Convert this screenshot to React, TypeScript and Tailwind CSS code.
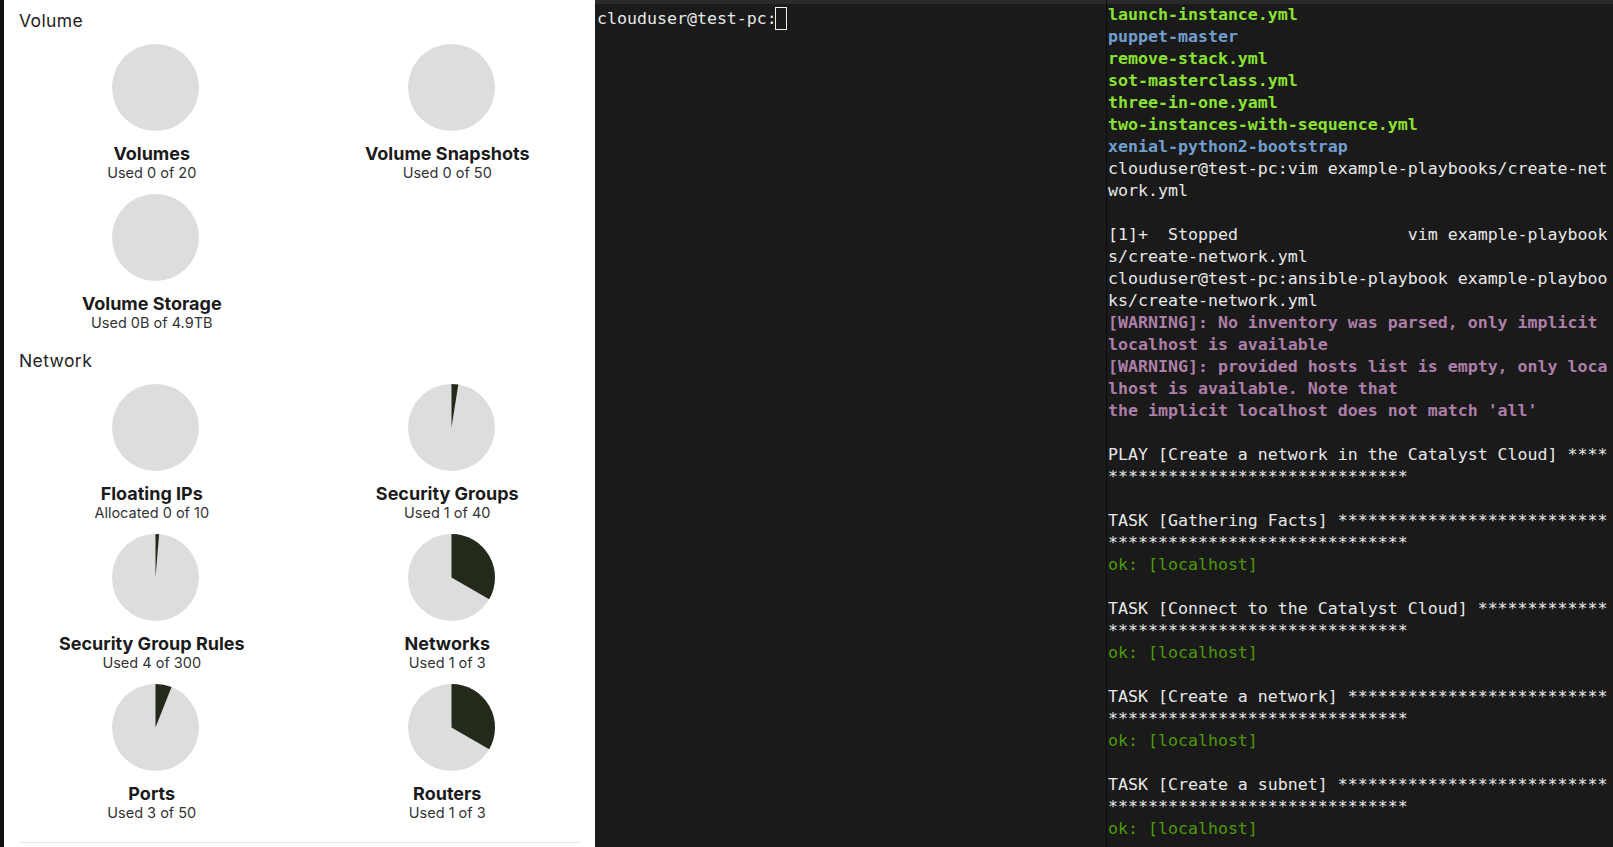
import React from "react";

type Quota = { title: string; sub: string; used: number; total: number };

const volume: Quota[] = [
  { title: "Volumes", sub: "Used 0 of 20", used: 0, total: 20 },
  { title: "Volume Snapshots", sub: "Used 0 of 50", used: 0, total: 50 },
  { title: "Volume Storage", sub: "Used 0B of 4.9TB", used: 0, total: 1 },
];

const network: Quota[] = [
  { title: "Floating IPs", sub: "Allocated 0 of 10", used: 0, total: 10 },
  { title: "Security Groups", sub: "Used 1 of 40", used: 1, total: 40 },
  { title: "Security Group Rules", sub: "Used 4 of 300", used: 4, total: 300 },
  { title: "Networks", sub: "Used 1 of 3", used: 1, total: 3 },
  { title: "Ports", sub: "Used 3 of 50", used: 3, total: 50 },
  { title: "Routers", sub: "Used 1 of 3", used: 1, total: 3 },
];

function Pie({ frac }: { frac: number }) {
  let slice = null;
  if (frac > 0) {
    const a = 2 * Math.PI * frac;
    const x = 50 + 50 * Math.sin(a);
    const y = 50 - 50 * Math.cos(a);
    const large = frac > 0.5 ? 1 : 0;
    slice = <path d={`M50 50 L50 0 A50 50 0 ${large} 1 ${x} ${y} Z`} fill="#232a1b" />;
  }
  return (
    <svg width="87" height="87" viewBox="0 0 100 100" className="ml-2 block">
      <circle cx="50" cy="50" r="50" fill="#dddddd" />
      {slice}
    </svg>
  );
}

function Cell({ q }: { q: Quota }) {
  return (
    <div className="flex h-[150px] flex-col items-center">
      <Pie frac={q.used / q.total} />
      <div className="mt-[13px] h-5 text-[18px] font-bold leading-5 text-[#1b1b1b]">{q.title}</div>
      <div className="h-[18px] text-[14.5px] leading-[18px] text-[#333333]">{q.sub}</div>
    </div>
  );
}

function Section({ title, items, first }: { title: string; items: Quota[]; first?: boolean }) {
  return (
    <div className={first ? "" : "mt-1"}>
      <div className="mb-3 h-6 pt-px text-[17.5px] leading-6 tracking-[0.4px] text-[#222]">{title}</div>
      <div className="-mx-[15px] grid grid-cols-2">
        {items.map((q) => (
          <Cell key={q.title} q={q} />
        ))}
      </div>
    </div>
  );
}

type Line = { t: string; c?: string };

const G = "font-bold text-[#8ae234]";
const B = "font-bold text-[#729fcf]";
const W = "font-bold text-[#ad7fa8]";
const OK = "text-[#4e9a06]";

const stars30 = "*".repeat(30);

const lines: Line[] = [
  { t: "launch-instance.yml", c: G },
  { t: "puppet-master", c: B },
  { t: "remove-stack.yml", c: G },
  { t: "sot-masterclass.yml", c: G },
  { t: "three-in-one.yaml", c: G },
  { t: "two-instances-with-sequence.yml", c: G },
  { t: "xenial-python2-bootstrap", c: B },
  { t: "clouduser@test-pc:vim example-playbooks/create-net" },
  { t: "work.yml" },
  { t: "" },
  { t: "[1]+  Stopped                 vim example-playbook" },
  { t: "s/create-network.yml" },
  { t: "clouduser@test-pc:ansible-playbook example-playboo" },
  { t: "ks/create-network.yml" },
  { t: "[WARNING]: No inventory was parsed, only implicit", c: W },
  { t: "localhost is available", c: W },
  { t: "[WARNING]: provided hosts list is empty, only loca", c: W },
  { t: "lhost is available. Note that", c: W },
  { t: "the implicit localhost does not match 'all'", c: W },
  { t: "" },
  { t: "PLAY [Create a network in the Catalyst Cloud] ****" },
  { t: stars30 },
  { t: "" },
  { t: "TASK [Gathering Facts] " + "*".repeat(27) },
  { t: stars30 },
  { t: "ok: [localhost]", c: OK },
  { t: "" },
  { t: "TASK [Connect to the Catalyst Cloud] " + "*".repeat(13) },
  { t: stars30 },
  { t: "ok: [localhost]", c: OK },
  { t: "" },
  { t: "TASK [Create a network] " + "*".repeat(26) },
  { t: stars30 },
  { t: "ok: [localhost]", c: OK },
  { t: "" },
  { t: "TASK [Create a subnet] " + "*".repeat(27) },
  { t: stars30 },
  { t: "ok: [localhost]", c: OK },
];

const mono = "font-['DejaVu_Sans_Mono',monospace] text-[16.6px] leading-[22px]";

export default function App() {
  return (
    <div className="flex h-[847px] w-[1613px] overflow-hidden bg-[#111111]">
      <div className="w-[4px] shrink-0 bg-[#121212]" />
      <div className="w-[591px] shrink-0 bg-white px-[15px] pt-2 font-['Inter',sans-serif]">
        <Section title="Volume" items={volume} first />
        <Section title="Network" items={network} />
        <div className="mt-2 h-px bg-[#e6e6e6]" />
      </div>
      <div className="flex w-[511px] shrink-0 flex-col bg-[#1b1b1b]">
        <div className="h-[4px] bg-[#2a2a2a]" />
        <div className={`pl-[2px] pt-[3px] text-[#e8e8e8] ${mono}`}>
          <div className="flex items-center whitespace-pre">
            <span>clouduser@test-pc:</span>
            <span className="-ml-[2px] inline-block h-[23px] w-[12px] border border-[#f0f0f0]" />
          </div>
        </div>
      </div>
      <div className="w-px shrink-0 bg-[#0c0c0c]" />
      <div className="flex min-w-0 flex-1 flex-col bg-[#1a1a1a]">
        <div className="h-[4px] bg-[#2a2a2a]" />
        <div className={`pl-px text-[#e8e8e8] ${mono}`}>
          {lines.map((l, i) => (
            <div key={i} className={`h-[22px] whitespace-pre ${l.c ?? ""}`}>
              {l.t}
            </div>
          ))}
        </div>
      </div>
    </div>
  );
}
